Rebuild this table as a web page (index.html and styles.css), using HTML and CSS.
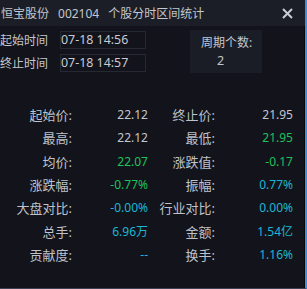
FILE: index.html
```html
<!DOCTYPE html>
<html lang="zh-CN">
<head>
<meta charset="utf-8">
<link rel="stylesheet" href="styles.css">
</head>
<body>
<div class="win">
  <div class="titlebar">
    <span class="t-name">恒宝股份</span>
    <span class="t-code">002104</span>
    <span class="t-title">个股分时区间统计</span>
    <svg class="close" width="11" height="11" viewBox="0 0 11 11"><path d="M1 1 L10 10 M10 1 L1 10" stroke="#c9ccd2" stroke-width="2" fill="none"/></svg>
  </div>
  <div class="top">
    <div class="times">
      <div class="trow"><span class="tlabel">起始时间</span><span class="tbox">07-18 14:56</span></div>
      <div class="trow"><span class="tlabel">终止时间</span><span class="tbox">07-18 14:57</span></div>
    </div>
    <div class="period">
      <div class="p-label">周期个数:</div>
      <div class="p-val">2</div>
    </div>
  </div>
  <div class="stats">
    <span class="lbl">起始价:</span><span class="val">22.12</span><span class="lbl">终止价:</span><span class="val">21.95</span>
    <span class="lbl">最高:</span><span class="val">22.12</span><span class="lbl">最低:</span><span class="val green">21.95</span>
    <span class="lbl">均价:</span><span class="val green">22.07</span><span class="lbl">涨跌值:</span><span class="val green">-0.17</span>
    <span class="lbl">涨跌幅:</span><span class="val green">-0.77%</span><span class="lbl">振幅:</span><span class="val cyan">0.77%</span>
    <span class="lbl">大盘对比:</span><span class="val cyan">-0.00%</span><span class="lbl">行业对比:</span><span class="val cyan">0.00%</span>
    <span class="lbl">总手:</span><span class="val cyan">6.96万</span><span class="lbl">金额:</span><span class="val cyan">1.54亿</span>
    <span class="lbl">贡献度:</span><span class="val cyan">--</span><span class="lbl">换手:</span><span class="val cyan">1.16%</span>
  </div>
</div>
</body>
</html>
```
FILE: styles.css
```css
html, body {
  margin: 0;
  padding: 0;
  background: #12131b;
}
body {
  width: 307px;
  height: 289px;
  overflow: hidden;
  font-family: "Noto Sans", "Noto Sans CJK SC", sans-serif;
  color: #c3c6ce;
}
.win {
  box-sizing: border-box;
  width: 307px;
  height: 289px;
  background: #12131b;
  border-right: 2px solid #3a8fe0;
  border-bottom: 1px solid #3c4052;
  box-shadow: inset -1px 0 0 #07080c;
  display: flex;
  flex-direction: column;
}
.titlebar {
  height: 26px;
  flex: none;
  background: #1b1e26;
  display: flex;
  align-items: center;
  padding-left: 1px;
  font-size: 12px;
  color: #c3c7cf;
}
.t-code { margin-left: 9px; }
.t-title { margin-left: 9px; }
.close { margin-left: auto; margin-right: 12px; }
.top {
  display: flex;
  padding-top: 4px;
  height: 48px;
  flex: none;
  font-size: 12px;
}
.times {
  display: flex;
  flex-direction: column;
  gap: 5px;
  padding-top: 1px;
}
.trow {
  display: flex;
  align-items: center;
  height: 18px;
}
.tlabel {
  width: 60px;
  padding-left: 0;
}
.tbox {
  box-sizing: border-box;
  width: 86px;
  height: 18px;
  border: 1px solid #252932;
  padding-left: 0;
  line-height: 16px;
  font-size: 12.4px;
  color: #c8cbd2;
}
.period {
  margin-left: 44px;
  width: 72px;
  height: 43px;
  background: #1a1d25;
  box-sizing: border-box;
  padding-top: 5px;
}
.p-label { padding-left: 11px; line-height: 16px; }
.p-val { padding-left: 27px; line-height: 19px; font-size: 12.5px; }
.stats {
  display: grid;
  grid-template-columns: 72px 76px 67px 78px;
  grid-auto-rows: 23.33px;
  align-items: center;
  margin-top: 25px;
}
.lbl {
  text-align: right;
  font-size: 13px;
  color: #bfc2ca;
}
.val {
  text-align: right;
  font-size: 12px;
  color: #c3c6ce;
}
.green { color: #1ec25a; }
.cyan { color: #1db6d3; }
```
